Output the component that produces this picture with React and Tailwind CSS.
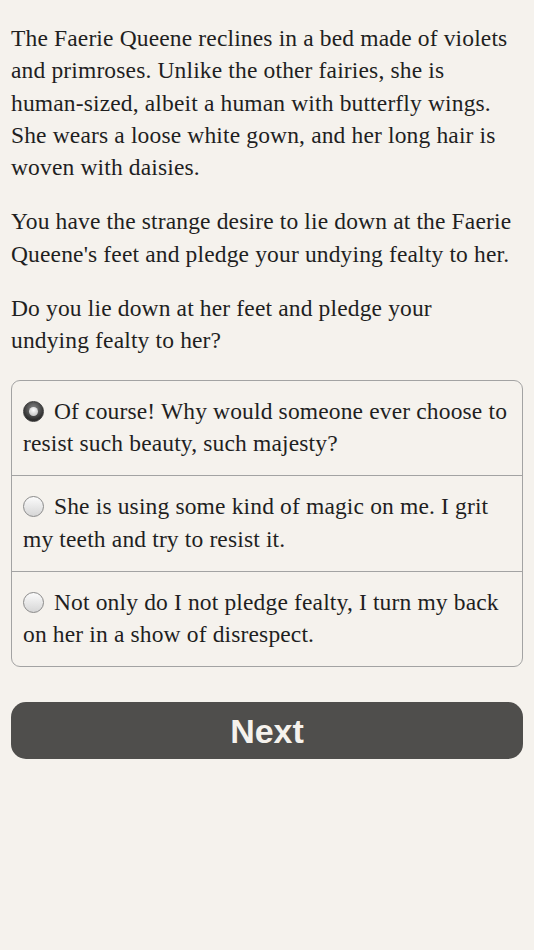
const options = [
  { id: 1, text: 'Of course! Why would someone ever choose to resist such beauty, such majesty?', checked: true },
  { id: 2, text: 'She is using some kind of magic on me. I grit my teeth and try to resist it.', checked: false },
  { id: 3, text: 'Not only do I not pledge fealty, I turn my back on her in a show of disrespect.', checked: false },
];

const Radio = ({ checked }) => (
  <span
    className={
      'relative inline-block align-[-3px] w-[21px] h-[21px] rounded-full border mr-[10px] ' +
      (checked
        ? 'border-[#3a3a3a] bg-[radial-gradient(circle_at_50%_35%,#8a8a8a,#2e2e2e_70%)]'
        : 'border-[#8a8a8a] bg-[linear-gradient(#fbfbfb,#d6d6d6)]')
    }
  >
    {checked && (
      <span className="absolute left-1/2 top-1/2 w-[9px] h-[9px] -ml-[4.5px] -mt-[4.5px] rounded-full bg-[radial-gradient(circle_at_50%_35%,#ffffff,#b5b5b5)]" />
    )}
  </span>
);

export default function App() {
  return (
    <div className="min-h-[950px] bg-[#f5f2ed] px-[11px] pt-[22px] text-[#1f1f1f] font-['Liberation_Serif',serif] text-[23.5px] tracking-[0.15px] leading-[32.3px]">
      <p className="mb-[22px]">
        The Faerie Queene reclines in a bed made of violets
        <br />
        and primroses. Unlike the other fairies, she is
        <br />
        human-sized, albeit a human with butterfly wings.
        <br />
        She wears a loose white gown, and her long hair is
        <br />
        woven with daisies.
      </p>
      <p className="mb-[22px]">
        You have the strange desire to lie down at the Faerie
        <br />
        Queene's feet and pledge your undying fealty to her.
      </p>
      <p className="mb-[23px]">
        Do you lie down at her feet and pledge your
        <br />
        undying fealty to her?
      </p>

      <div className="border border-[#a3a3a3] rounded-[9px] overflow-hidden">
        {options.map((o, i) => (
          <label
            key={o.id}
            className={'block px-[11px] pt-[14px] pb-[16px] ' + (i > 0 ? 'border-t border-[#a3a3a3]' : '')}
          >
            <Radio checked={o.checked} />
            {o.text}
          </label>
        ))}
      </div>

      <button className="mt-[35px] w-full h-[57px] rounded-[15px] bg-[#4f4e4c] text-[#f5f2ed] font-['Liberation_Sans',sans-serif] font-bold text-[34px] tracking-normal">
        Next
      </button>
    </div>
  );
}
